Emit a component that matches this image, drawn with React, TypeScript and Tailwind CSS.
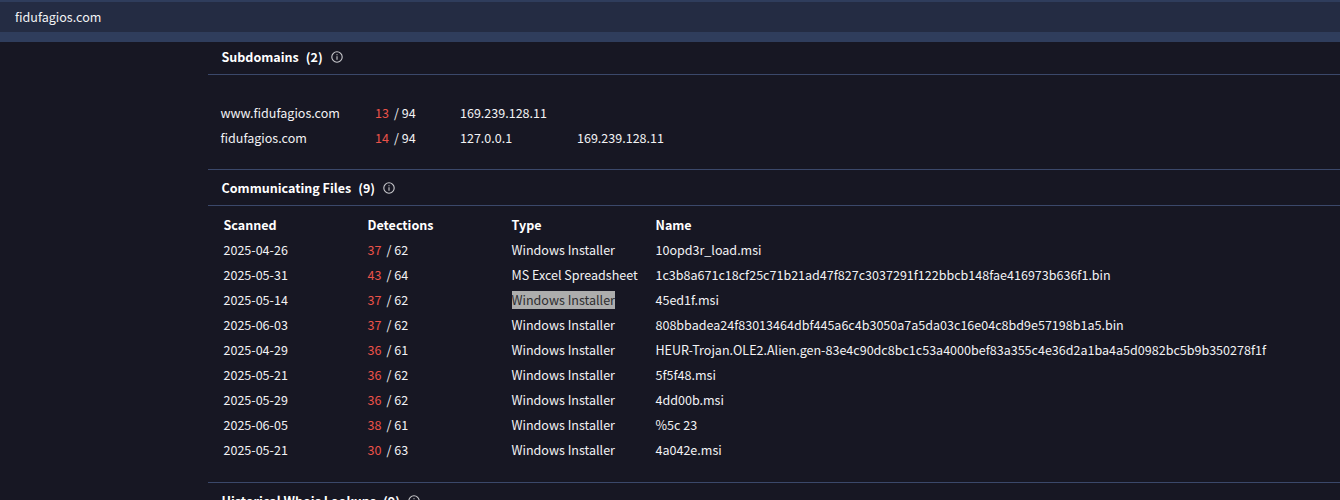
import type { ReactNode } from "react";

type FileRow = { scanned: string; hits: number; total: number; type: string; name: string; selected?: boolean };

const files: FileRow[] = [
  { scanned: "2025-04-26", hits: 37, total: 62, type: "Windows Installer", name: "10opd3r_load.msi" },
  { scanned: "2025-05-31", hits: 43, total: 64, type: "MS Excel Spreadsheet", name: "1c3b8a671c18cf25c71b21ad47f827c3037291f122bbcb148fae416973b636f1.bin" },
  { scanned: "2025-05-14", hits: 37, total: 62, type: "Windows Installer", name: "45ed1f.msi", selected: true },
  { scanned: "2025-06-03", hits: 37, total: 62, type: "Windows Installer", name: "808bbadea24f83013464dbf445a6c4b3050a7a5da03c16e04c8bd9e57198b1a5.bin" },
  { scanned: "2025-04-29", hits: 36, total: 61, type: "Windows Installer", name: "HEUR-Trojan.OLE2.Alien.gen-83e4c90dc8bc1c53a4000bef83a355c4e36d2a1ba4a5d0982bc5b9b350278f1f" },
  { scanned: "2025-05-21", hits: 36, total: 62, type: "Windows Installer", name: "5f5f48.msi" },
  { scanned: "2025-05-29", hits: 36, total: 62, type: "Windows Installer", name: "4dd00b.msi" },
  { scanned: "2025-06-05", hits: 38, total: 61, type: "Windows Installer", name: "%5c 23" },
  { scanned: "2025-05-21", hits: 30, total: 63, type: "Windows Installer", name: "4a042e.msi" },
];

const subdomains = [
  { host: "www.fidufagios.com", hits: 13, total: 94, ips: ["169.239.128.11"] },
  { host: "fidufagios.com", hits: 14, total: 94, ips: ["127.0.0.1", "169.239.128.11"] },
];

function InfoIcon() {
  return (
    <svg className="ml-[8.3px] size-3 shrink-0" viewBox="0 0 12 12" fill="none" stroke="#c9c9cd">
      <circle cx="6" cy="6" r="5.2" strokeWidth="1.1" />
      <path d="M6 5.2V8.8M6 3.2V4.3" strokeWidth="1.1" />
    </svg>
  );
}

function SectionTitle({ title, count, className }: { title: string; count: number; className: string }) {
  return (
    <div className={`flex shrink-0 items-center border-b border-[#3b486a] pl-[13.5px] font-bold text-white ${className}`}>
      <span>{title}</span>
      <span className="ml-[7px]">({count})</span>
      <InfoIcon />
    </div>
  );
}

function Ratio({ hits, total }: { hits: number; total: number }) {
  return (
    <div className="flex">
      <span className="w-[19px] text-[#ea5249]">{hits}</span>
      <span>/ {total}</span>
    </div>
  );
}

function Row({ children, bold = false }: { children: ReactNode; bold?: boolean }) {
  return (
    <div className={`grid h-[25px] grid-cols-[144px_144px_144px_1fr] items-center pl-[15.5px] ${bold ? "font-bold text-white" : ""}`}>
      {children}
    </div>
  );
}

export default function App() {
  return (
    <div className="flex h-[500px] w-[1340px] flex-col overflow-hidden bg-[#171723] font-['Noto_Sans_CJK_SC',sans-serif] text-[12.541px] leading-[18px] whitespace-nowrap text-[#f2f2f4]">
      <header className="flex h-[42px] shrink-0 items-center border-t-2 border-b-10 border-[#2f3d5c] bg-[#242c43] pl-[15px]">
        fidufagios.com
      </header>
      <main className="ml-[208px] flex flex-col">
        <SectionTitle title="Subdomains" count={2} className="h-[33px] pb-[2px]" />
        <div className="h-[95px] shrink-0 border-b border-[#3b486a] pt-[25px] pl-[12.5px]">
          {subdomains.map((s) => (
            <div key={s.host} className="grid h-[25px] grid-cols-[154.5px_85px_117px_1fr] items-center">
              <span>{s.host}</span>
              <Ratio hits={s.hits} total={s.total} />
              {s.ips.map((ip) => (
                <span key={ip}>{ip}</span>
              ))}
            </div>
          ))}
        </div>
        <SectionTitle title="Communicating Files" count={9} className="h-[36px]" />
        <div className="h-[277px] shrink-0 border-b border-[#3b486a] pt-[6px]">
          <Row bold>
            <span>Scanned</span>
            <span>Detections</span>
            <span>Type</span>
            <span>Name</span>
          </Row>
          {files.map((f) => (
            <Row key={f.name}>
              <span>{f.scanned}</span>
              <Ratio hits={f.hits} total={f.total} />
              <span className={f.selected ? "justify-self-start bg-[#adadad] text-[#2d2d30]" : ""}>{f.type}</span>
              <span>{f.name}</span>
            </Row>
          ))}
        </div>
        <SectionTitle title="Historical Whois Lookups" count={9} className="h-[36px]" />
      </main>
    </div>
  );
}
